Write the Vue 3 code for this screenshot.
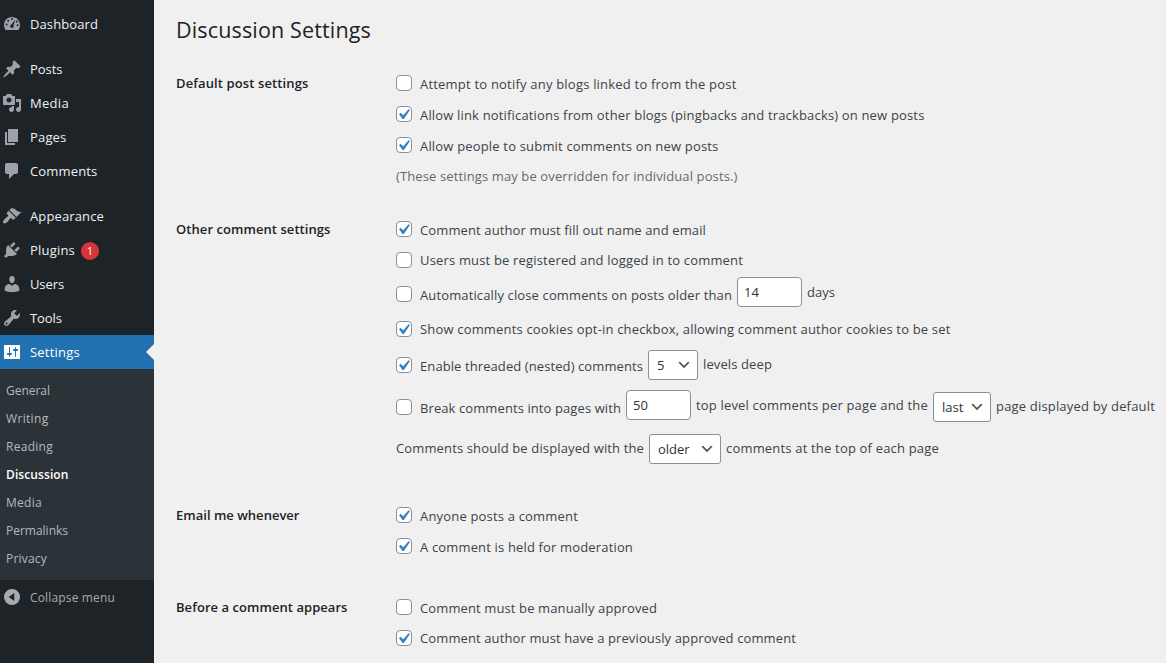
<script setup>
import { nextTick } from 'vue'

// Distributes letter spacing so a label occupies its intended measure.
const vFit = {
  mounted(el, { value }) {
    nextTick(() => {
      const chars = el.textContent.length
      const gap = (value - el.getBoundingClientRect().width) / chars
      el.style.letterSpacing = gap.toFixed(3) + 'px'
    })
  }
}

const icons = {
  dashboard: 'M3.76 16h12.48c1.1-1.37 1.76-3.11 1.76-5 0-4.42-3.58-8-8-8s-8 3.58-8 8c0 1.89.66 3.63 1.76 5zM10 4a1 1 0 1 1 0 2 1 1 0 0 1 0-2zM6.2 5.7a1 1 0 1 1 0 2 1 1 0 0 1 0-2zM13.2 5.4L11.5 11.4C12.1 12.6 11.3 14 10 14s-2.2-1.3-1.7-2.5c.3-.6.8-.9 1.2-1zM14.8 6.4a1 1 0 1 1 0 2 1 1 0 0 1 0-2zM4.6 9.6a1 1 0 1 1 0 2 1 1 0 0 1 0-2zM15.6 10.2a1 1 0 1 1 0 2 1 1 0 0 1 0-2z',
  posts: 'M10.44 3.02l1.82-1.82 6.36 6.35-1.83 1.82c-1.05-.68-2.48-.57-3.41.36l-.75.75c-.92.93-1.04 2.35-.35 3.41l-1.83 1.82-2.41-2.41-2.8 2.79c-.42.42-3.38 2.71-3.8 2.29s1.86-3.39 2.28-3.81l2.79-2.79L4.1 9.36l1.83-1.82c1.05.69 2.48.57 3.4-.36l.75-.75c.93-.92 1.05-2.35.36-3.41z',
  media: 'M13 11V4c0-.55-.45-1-1-1h-1.67L9 1H5L3.67 3H2c-.55 0-1 .45-1 1v7c0 .55.45 1 1 1h10c.55 0 1-.45 1-1zM7 4.5c1.38 0 2.5 1.12 2.5 2.5S8.38 9.5 7 9.5 4.5 8.38 4.5 7 5.62 4.5 7 4.5zM14 6h5v10.5c0 1.38-1.12 2.5-2.5 2.5S14 17.88 14 16.5s1.12-2.5 2.5-2.5c.17 0 .34.02.5.05V9h-3V6zm-4 8.05V13h2v3.5c0 1.38-1.12 2.5-2.5 2.5S7 17.88 7 16.5 8.12 14 9.5 14c.17 0 .34.02.5.05z',
  pages: 'M6 15V2h10v13H6zm-1 1h8v2H3V5h2v11z',
  comments: 'M5 2h9c1.1 0 2 .9 2 2v7c0 1.1-.9 2-2 2h-2l-5 5v-5H5c-1.1 0-2-.9-2-2V4c0-1.1.9-2 2-2z',
  appearance: 'M14.48 11.06L7.41 3.99l1.5-1.5c.5-.56 2.3-.47 3.51.32 1.21.8 1.43 1.28 2.91 2.1 1.18.64 2.45 1.26 4.45.85zm-.71.71L6.7 4.7 4.93 6.47c-.39.39-.39 1.02 0 1.41l1.06 1.06c.39.39.39 1.03 0 1.42-.6.6-1.43 1.11-2.21 1.69-.35.26-.7.53-1.01.84C1.43 14.23.4 16.08 1.4 17.07c.99 1 2.84-.03 4.18-1.36.31-.31.58-.66.85-1.02.57-.78 1.08-1.61 1.69-2.21.39-.39 1.02-.39 1.41 0l1.06 1.06c.39.39 1.02.39 1.41 0z',
  plugins: 'M13.11 4.36L9.87 7.6 8 5.73l3.24-3.24c.35-.34 1.05-.2 1.56.32.52.51.66 1.21.31 1.55zm-8 1.77l.91-1.12 9.01 9.01-1.19.84c-.71.71-2.63 1.16-3.82 1.16H6.14L4.9 17.26c-.59.59-1.54.59-2.12 0-.59-.58-.59-1.53 0-2.12l1.24-1.24v-3.88c0-1.13.4-3.19 1.09-3.89zm7.26 3.97l3.24-3.24c.34-.35 1.04-.21 1.55.31.52.51.66 1.21.31 1.55l-3.24 3.25z',
  users: 'M10 9.25c-2.27 0-2.73-3.44-2.73-3.44C7 4.02 7.82 2 9.97 2c2.16 0 2.98 2.02 2.71 3.81 0 0-.41 3.44-2.68 3.44zm0 2.57L12.72 10c2.39 0 4.52 2.33 4.52 4.53v2.49s-3.65 1.13-7.24 1.13c-3.65 0-7.24-1.13-7.24-1.13v-2.49c0-2.25 1.94-4.48 4.47-4.48z',
  tools: 'M16.68 9.77c-1.34 1.34-3.3 1.67-4.95.99l-5.41 6.52c-.99.99-2.59.99-3.58 0s-.99-2.59 0-3.57l6.52-5.42c-.68-1.65-.35-3.61.99-4.95 1.28-1.28 3.12-1.62 4.72-1.06l-2.89 2.89 2.82 2.82 2.86-2.87c.53 1.58.18 3.39-1.08 4.65zM3.81 16.21c.4.39 1.04.39 1.43 0 .4-.4.4-1.04 0-1.43-.39-.4-1.03-.4-1.43 0-.39.39-.39 1.03 0 1.43z',
  settings: 'M18 16V4c0-.55-.45-1-1-1H3c-.55 0-1 .45-1 1v12c0 .55.45 1 1 1h14c.55 0 1-.45 1-1zM8 11h1c.55 0 1 .45 1 1s-.45 1-1 1H8v1.5c0 .28-.22.5-.5.5s-.5-.22-.5-.5V13H6c-.55 0-1-.45-1-1s.45-1 1-1h1V5.5c0-.28.22-.5.5-.5s.5.22.5.5V11zm5-2h-1c-.55 0-1-.45-1-1s.45-1 1-1h1V5.5c0-.28.22-.5.5-.5s.5.22.5.5V7h1c.55 0 1 .45 1 1s-.45 1-1 1h-1v5.5c0 .28-.22.5-.5.5s-.5-.22-.5-.5V9z'
}

const menu = [
  [{ t: 'Dashboard', w: 68, i: 'dashboard' }],
  [
    { t: 'Posts', w: 32.5, i: 'posts' },
    { t: 'Media', w: 39, i: 'media' },
    { t: 'Pages', w: 36.5, i: 'pages' },
    { t: 'Comments', w: 67.5, i: 'comments' }
  ],
  [
    { t: 'Appearance', w: 74, i: 'appearance' },
    { t: 'Plugins', w: 45, i: 'plugins', badge: 1 },
    { t: 'Users', w: 34, i: 'users' },
    { t: 'Tools', w: 32, i: 'tools' },
    { t: 'Settings', w: 50, i: 'settings', current: true }
  ]
]
const submenu = [
  { t: 'General', w: 44 },
  { t: 'Writing', w: 42.5 },
  { t: 'Reading', w: 47 },
  { t: 'Discussion', w: 62.5, current: true },
  { t: 'Media', w: 36 },
  { t: 'Permalinks', w: 62 },
  { t: 'Privacy', w: 41 }
]

const check = (on) => ({ k: 'check', on })
const text = (t, w, pos = '') => ({ k: 'text', t, w, pos })
const input = (t, pos = '') => ({ k: 'input', t, pos })
const select = (t, w) => ({ k: 'select', t, w })

const groups = [
  {
    title: 'Default post settings', w: 132.5,
    rows: [
      { h: 30, p: [check(false), text('Attempt to notify any blogs linked to from the post', 316.5, 'low')] },
      { h: 32, p: [check(true), text('Allow link notifications from other blogs (pingbacks and trackbacks) on new posts', 504.5, 'low')] },
      { h: 30, p: [check(true), text('Allow people to submit comments on new posts', 298.5, 'low')] },
      { h: 32, note: true, p: [text('(These settings may be overridden for individual posts.)', 341.5)] }
    ]
  },
  {
    title: 'Other comment settings', w: 154.5,
    rows: [
      { h: 30, p: [check(true), text('Comment author must fill out name and email', 286, 'low')] },
      { h: 32, p: [check(false), text('Users must be registered and logged in to comment', 323)] },
      { h: 36, p: [check(false), text('Automatically close comments on posts older than', 312, 'low'), input('14', 'high'), text('days', 28, 'high')] },
      { h: 34, p: [check(true), text('Show comments cookies opt-in checkbox, allowing comment author cookies to be set', 530.5)] },
      { h: 38, p: [check(true), text('Enable threaded (nested) comments', 223, 'low'), select('5', 50), text('levels deep', 69, 'raised')] },
      { h: 46, p: [check(false), text('Break comments into pages with', 201, 'low'), input('50', 'high'), text('top level comments per page and the', 232, 'high'), select('last', 58), text('page displayed by default', 159, 'raised')] },
      { h: 38, p: [text('Comments should be displayed with the', 248, 'raised'), select('older', 72), text('comments at the top of each page', 213, 'raised')] }
    ]
  },
  {
    title: 'Email me whenever', w: 123.5,
    rows: [
      { h: 30, p: [check(true), text('Anyone posts a comment', 158, 'low')] },
      { h: 32, p: [check(true), text('A comment is held for moderation', 213, 'low')] }
    ]
  },
  {
    title: 'Before a comment appears', w: 171.5,
    rows: [
      { h: 30, p: [check(false), text('Comment must be manually approved', 237, 'low')] },
      { h: 32, p: [check(true), text('Comment author must have a previously approved comment', 376)] }
    ]
  }
]
</script>

<template>
  <div class="screen">
    <nav class="sidebar">
      <ul v-for="(section, s) in menu" :key="s" class="section">
        <li v-for="item in section" :key="item.t" class="item" :class="{ current: item.current }">
          <svg class="icon" viewBox="0 0 20 20"><path :d="icons[item.i]" fill-rule="evenodd" /></svg>
          <span v-fit="item.w">{{ item.t }}</span>
          <span v-if="item.badge" class="badge">{{ item.badge }}</span>
          <i v-if="item.current" class="pointer"></i>
        </li>
      </ul>
      <ul class="submenu">
        <li v-for="item in submenu" :key="item.t" :class="{ active: item.current }">
          <span v-fit="item.w">{{ item.t }}</span>
        </li>
      </ul>
      <div class="item collapse">
        <svg class="icon" viewBox="0 0 20 20">
          <path fill-rule="evenodd" d="M10 2a8 8 0 1 1 0 16 8 8 0 0 1 0-16zM12.3 6v8L6.7 10z" />
        </svg>
        <span v-fit="85" class="collapse-label">Collapse menu</span>
      </div>
    </nav>

    <main class="content">
      <h1><span v-fit="195">Discussion Settings</span></h1>
      <section v-for="g in groups" :key="g.title" class="group">
        <h2><span v-fit="g.w">{{ g.title }}</span></h2>
        <div class="fields">
          <div v-for="(r, n) in g.rows" :key="n" class="row" :class="{ note: r.note }" :style="{ height: r.h + 'px' }">
            <template v-for="(p, m) in r.p" :key="m">
              <span v-if="p.k === 'check'" class="check">
                <svg v-if="p.on" viewBox="0 0 20 20"><path d="M14.83 4.89l1.34.94-5.81 8.38H9.02L5.78 9.67l1.34-1.25 2.57 2.4z" /></svg>
              </span>
              <span v-else-if="p.k === 'text'" class="cell" :class="p.pos" :style="{ width: p.w + 'px' }"><span v-fit="p.w">{{ p.t }}</span></span>
              <span v-else-if="p.k === 'input'" class="control input" :class="p.pos">{{ p.t }}</span>
              <span v-else class="control select" :style="{ width: p.w + 'px' }">
                {{ p.t }}
                <svg viewBox="0 0 20 20"><path d="M5 6l5 5 5-5 2 1-7 7-7-7 2-1z" /></svg>
              </span>
            </template>
          </div>
        </div>
      </section>
    </main>
  </div>
</template>

<style>
body {
  margin: 0;
  overflow: hidden;
}
</style>

<style scoped>
* {
  box-sizing: border-box;
}
.screen {
  display: flex;
  width: 1166px;
  height: 663px;
  overflow: hidden;
  background: #f0f0f0;
  color: #3c434a;
  font: 13px/20px "Open Sans", "Noto Sans", sans-serif;
  white-space: nowrap;
}
ul {
  list-style: none;
  margin: 0;
  padding: 0;
}
.sidebar {
  flex: none;
  width: 154px;
  padding-top: 7px;
  background: #1d2327;
  color: #f0f0f1;
}
.section + .section {
  margin-top: 11px;
}
.item {
  position: relative;
  display: flex;
  align-items: center;
  height: 34px;
  padding-left: 2.4px;
}
.icon {
  flex: none;
  width: 20px;
  height: 20px;
  margin-right: 7.6px;
  fill: #9ca2a7;
}
.current {
  background: #2271b1;
  color: #fff;
}
.current .icon {
  fill: #fff;
}
.pointer {
  position: absolute;
  right: 0;
  top: 9px;
  border: 8px solid transparent;
  border-left: 0;
  border-right-color: #f0f0f0;
}
.badge {
  width: 18px;
  height: 18px;
  margin-left: 6px;
  margin-top: 2px;
  border-radius: 9px;
  background: #d63638;
  color: #fff;
  font-size: 10.5px;
  line-height: 18px;
  text-align: center;
}
.submenu {
  padding: 8px 0 7px 6px;
  background: #2c3338;
  color: #b4b9be;
  font-size: 12px;
  line-height: 28px;
}
.submenu li {
  height: 28px;
}
.submenu .active {
  color: #fff;
  font-weight: 600;
}
.collapse {
  color: #a7aaad;
  font-size: 12px;
}
.collapse-label {
  margin-top: 2px;
}
.collapse .icon {
  fill: #a7aaad;
}
.content {
  flex: 1;
  padding: 14px 0 0 22px;
}
h1 {
  height: 32px;
  margin: 0 0 22px;
  color: #1d2327;
  font-size: 21.5px;
  font-weight: 400;
  line-height: 32px;
}
.group {
  display: grid;
  grid-template-columns: 220px 1fr;
}
.group + .group {
  margin-top: 22px;
}
.group:nth-of-type(3) {
  margin-top: 32px;
}
.group:nth-of-type(4) {
  margin-top: 30px;
}
h2 {
  margin: 0;
  color: #1d2327;
  font-size: 13px;
  font-weight: 600;
  line-height: 30px;
}
.row {
  display: flex;
  align-items: center;
  gap: 5px;
}
.note {
  color: #646970;
}
.cell {
  flex: none;
}
.low {
  margin-top: 2px;
}
.raised {
  margin-bottom: 2px;
}
.high {
  margin-bottom: 4px;
}
.check {
  flex: none;
  width: 16px;
  height: 16px;
  margin-right: 3px;
  border: 1px solid #8c8f94;
  border-radius: 4px;
  background: #fff;
}
.check svg {
  display: block;
  width: 21px;
  height: 21px;
  margin: -3px 0 0 -4px;
  fill: #3582c4;
}
.control {
  flex: none;
  display: flex;
  align-items: center;
  height: 30px;
  padding: 0 5px 0 8px;
  border: 1px solid #8c8f94;
  border-radius: 4px;
  background: #fff;
  color: #2c3338;
}
.input {
  width: 65px;
  padding-left: 6px;
}
.select {
  justify-content: space-between;
  border-radius: 3px;
}
.select svg {
  width: 16px;
  height: 16px;
  fill: #555;
}
</style>
